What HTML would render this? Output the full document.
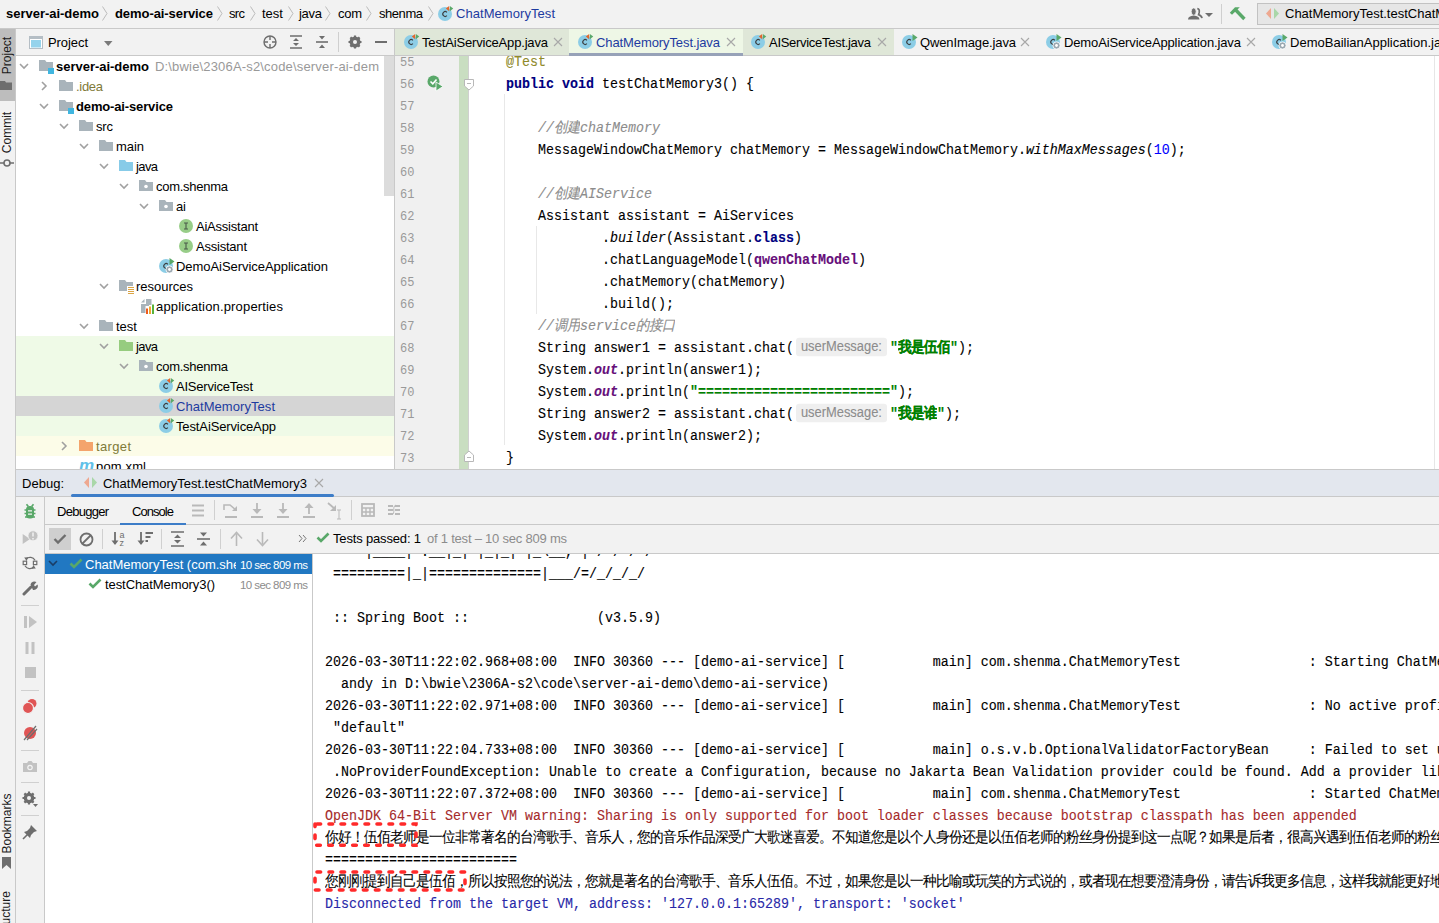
<!DOCTYPE html>
<html><head><meta charset="utf-8"><title>IDE</title><style>
html,body{margin:0;padding:0;width:1439px;height:923px;overflow:hidden;background:#f2f2f2}
body>*,body div,body svg{position:absolute}
.t{white-space:pre;font-family:"Liberation Sans",sans-serif;font-size:13px;color:#000}
.code{font-family:"Liberation Mono",monospace;font-size:13.335px;color:#000;transform:scaleY(1.1);transform-origin:0 14.5px;-webkit-text-stroke:0.1px currentColor}
.cj{display:inline-block;overflow:hidden;vertical-align:top;white-space:nowrap}
.hint{display:inline-block;position:relative;vertical-align:top;margin:1.3px 3px 0 2px;width:91px;height:16.4px;line-height:16.4px;background:#efefef;border-radius:3px;font-family:"Liberation Sans",sans-serif;font-size:12.9px;color:#8c8c8c;text-indent:5px;overflow:hidden}
</style></head><body>
<div style="left:0px;top:0px;width:1439px;height:923px;background:#f2f2f2;"></div>
<div style="left:0px;top:28px;width:1439px;height:1px;background:#c9c9c9;"></div>
<div class="t" style="letter-spacing:-0.017px;left:6px;top:3.5px;height:20px;line-height:20px;font-family:'Liberation Sans', sans-serif;font-size:13px;font-weight:bold;font-style:normal;color:#000;">server-ai-demo</div>
<svg style="left:100.5px;top:6px;" width="8" height="15" viewBox="0 0 8 15"><path d="M1.5 0.5 L6 7.5 L1.5 14.5" fill="none" stroke="#bcbcbc" stroke-width="1"/></svg>
<div class="t" style="letter-spacing:-0.071px;left:115px;top:3.5px;height:20px;line-height:20px;font-family:'Liberation Sans', sans-serif;font-size:13px;font-weight:bold;font-style:normal;color:#000;">demo-ai-service</div>
<svg style="left:215.5px;top:6px;" width="8" height="15" viewBox="0 0 8 15"><path d="M1.5 0.5 L6 7.5 L1.5 14.5" fill="none" stroke="#bcbcbc" stroke-width="1"/></svg>
<div class="t" style="letter-spacing:-0.672px;left:229px;top:3.5px;height:20px;line-height:20px;font-family:'Liberation Sans', sans-serif;font-size:13px;font-weight:normal;font-style:normal;color:#000;">src</div>
<svg style="left:248.5px;top:6px;" width="8" height="15" viewBox="0 0 8 15"><path d="M1.5 0.5 L6 7.5 L1.5 14.5" fill="none" stroke="#bcbcbc" stroke-width="1"/></svg>
<div class="t" style="letter-spacing:0.010px;left:262px;top:3.5px;height:20px;line-height:20px;font-family:'Liberation Sans', sans-serif;font-size:13px;font-weight:normal;font-style:normal;color:#000;">test</div>
<svg style="left:286.5px;top:6px;" width="8" height="15" viewBox="0 0 8 15"><path d="M1.5 0.5 L6 7.5 L1.5 14.5" fill="none" stroke="#bcbcbc" stroke-width="1"/></svg>
<div class="t" style="letter-spacing:-0.286px;left:299px;top:3.5px;height:20px;line-height:20px;font-family:'Liberation Sans', sans-serif;font-size:13px;font-weight:normal;font-style:normal;color:#000;">java</div>
<svg style="left:323.5px;top:6px;" width="8" height="15" viewBox="0 0 8 15"><path d="M1.5 0.5 L6 7.5 L1.5 14.5" fill="none" stroke="#bcbcbc" stroke-width="1"/></svg>
<div class="t" style="letter-spacing:-0.281px;left:338px;top:3.5px;height:20px;line-height:20px;font-family:'Liberation Sans', sans-serif;font-size:13px;font-weight:normal;font-style:normal;color:#000;">com</div>
<svg style="left:364.5px;top:6px;" width="8" height="15" viewBox="0 0 8 15"><path d="M1.5 0.5 L6 7.5 L1.5 14.5" fill="none" stroke="#bcbcbc" stroke-width="1"/></svg>
<div class="t" style="letter-spacing:-0.450px;left:379px;top:3.5px;height:20px;line-height:20px;font-family:'Liberation Sans', sans-serif;font-size:13px;font-weight:normal;font-style:normal;color:#000;">shenma</div>
<svg style="left:426.5px;top:6px;" width="8" height="15" viewBox="0 0 8 15"><path d="M1.5 0.5 L6 7.5 L1.5 14.5" fill="none" stroke="#bcbcbc" stroke-width="1"/></svg>
<svg style="left:438px;top:6px;" width="17" height="17" viewBox="0 0 17 17"><circle cx="7" cy="8" r="7" fill="#8ccde6"/><path d="M8.9 6.3 A2.4 2.4 0 1 0 8.9 9.7" fill="none" stroke="#3c3f41" stroke-width="1.1"/><path d="M7.8 2.6 L11.2 0 V5.2 Z" fill="#e2662c"/><path d="M11.9 0 L15.2 2.6 L11.9 5.2 Z" fill="#59a869"/></svg>
<div class="t" style="letter-spacing:0.058px;left:456px;top:3.5px;height:20px;line-height:20px;font-family:'Liberation Sans', sans-serif;font-size:13px;font-weight:normal;font-style:normal;color:#1d3ba0;">ChatMemoryTest</div>
<svg style="left:1186px;top:6px;" width="18" height="16" viewBox="0 0 18 16"><path d="M11.3 2.6 Q13.8 2.8 13.2 6.5 L12.6 8.6 Q15.6 9.6 16 12.2" fill="none" stroke="#6e6e6e" stroke-width="1.7"/><ellipse cx="7.7" cy="5.6" rx="2.5" ry="3.7" fill="#6e6e6e" stroke="#f2f2f2" stroke-width="0.8"/><path d="M2 13.5 Q2.3 10 7.7 9.6 Q13.2 10 13.5 13.5 Z" fill="#6e6e6e"/></svg>
<svg style="left:1205px;top:13px;" width="9" height="5" viewBox="0 0 9 5"><path d="M0 0 H8 L4 4 Z" fill="#6e6e6e"/></svg>
<div style="left:1221px;top:4px;width:1px;height:20px;background:#cfcfcf;"></div>
<svg style="left:1229px;top:5px;" width="18" height="18" viewBox="0 0 18 18"><path d="M0.8 7.8 L6 2.2 L10.8 2.2 L7.2 5.8 L3 9.8 Z" fill="#59a869"/><path d="M6.5 4.8 L15.4 14" stroke="#59a869" stroke-width="3.4"/></svg>
<div style="left:1257px;top:3px;width:190px;height:22px;background:#e6e6e6;border:1px solid #c2c2c2;box-sizing:border-box;"></div>
<svg style="left:1266px;top:7px;" width="14" height="13" viewBox="0 0 14 13"><path d="M5 1 L0 6.5 L5 12 Z" fill="#eea890"/><path d="M8 1 L13 6.5 L8 12 Z" fill="#a9d7a9"/></svg>
<div class="t" style="left:1285px;top:3.5px;height:20px;line-height:20px;font-family:'Liberation Sans', sans-serif;font-size:13px;font-weight:normal;font-style:normal;color:#000;">ChatMemoryTest.testChatMemoryTest</div>
<div style="left:15px;top:29px;width:1px;height:894px;background:#c9c9c9;"></div>
<div style="left:0px;top:29px;width:15px;height:72px;background:#bdbdbd;"></div>
<div class="t vlabel" style="left:-26px;top:48px;width:66px;height:15px;line-height:15px;font-size:12px;transform:rotate(-90deg);text-align:center;color:#1a1a1a">Project</div>
<svg style="left:0px;top:81px;" width="13" height="9" viewBox="0 0 13 9"><path d="M0 0 H5 L6 1.5 H12 V9 H0 Z" fill="#6e6e6e"/></svg>
<div class="t vlabel" style="left:-26px;top:125px;width:66px;height:15px;line-height:15px;font-size:12px;transform:rotate(-90deg);text-align:center;color:#1a1a1a">Commit</div>
<svg style="left:0px;top:158px;" width="14" height="10" viewBox="0 0 14 10"><circle cx="7" cy="5" r="3" fill="none" stroke="#6e6e6e" stroke-width="1.6"/><path d="M0 5 H4 M10 5 H14" stroke="#6e6e6e" stroke-width="1.6"/></svg>
<div class="t vlabel" style="left:-23px;top:816px;width:60px;height:15px;line-height:15px;font-size:12px;transform:rotate(-90deg);text-align:center;color:#1a1a1a">Bookmarks</div>
<svg style="left:1px;top:857px;" width="12" height="13" viewBox="0 0 12 13"><path d="M1 0 H10 V12 L5.5 8 L1 12 Z" fill="#6e6e6e"/></svg>
<div class="t vlabel" style="left:-24px;top:908px;width:60px;height:15px;line-height:15px;font-size:12px;transform:rotate(-90deg);text-align:center;color:#1a1a1a">Structure</div>
<div style="left:16px;top:55px;width:378px;height:1px;background:#c9c9c9;"></div>
<svg style="left:29px;top:36px;" width="14" height="13" viewBox="0 0 14 13"><rect x="0.5" y="0.5" width="13" height="12" fill="#fff" stroke="#b5bec5"/><rect x="0.5" y="0.5" width="13" height="2.5" fill="#b5bec5"/><rect x="2" y="4" width="10" height="7.5" fill="#95d3ec"/></svg>
<div class="t" style="letter-spacing:-0.078px;left:48px;top:33.0px;height:20px;line-height:20px;font-family:'Liberation Sans', sans-serif;font-size:13px;font-weight:normal;font-style:normal;color:#000;">Project</div>
<svg style="left:104px;top:41px;" width="10" height="6" viewBox="0 0 10 6"><path d="M0 0 H8.5 L4.25 5 Z" fill="#7a7a7a"/></svg>
<svg style="left:263px;top:35px;" width="14" height="14" viewBox="0 0 14 14"><circle cx="7" cy="7" r="6" fill="none" stroke="#6e6e6e" stroke-width="1.4"/><path d="M7 1 V5 M7 9 V13 M1 7 H5 M9 7 H13" stroke="#6e6e6e" stroke-width="1.4"/></svg>
<svg style="left:290px;top:35px;" width="13" height="14" viewBox="0 0 13 14"><path d="M0 1 H12 M0 13 H12" stroke="#6e6e6e" stroke-width="1.6"/><path d="M3 6 L6 3 L9 6 Z M3 8 L6 11 L9 8 Z" fill="#6e6e6e"/></svg>
<svg style="left:316px;top:35px;" width="13" height="14" viewBox="0 0 13 14"><path d="M0 7 H12" stroke="#6e6e6e" stroke-width="1.6"/><path d="M3 1 H9 L6 4.5 Z M3 13 H9 L6 9.5 Z" fill="#6e6e6e"/></svg>
<div style="left:338px;top:32px;width:1px;height:20px;background:#cfcfcf;"></div>
<svg style="left:348px;top:35px;" width="14" height="14" viewBox="0 0 14 14"><circle cx="7" cy="7" r="4.2" fill="none" stroke="#6e6e6e" stroke-width="2.6"/><path d="M7 0.5 V13.5 M0.5 7 H13.5 M2.4 2.4 L11.6 11.6 M11.6 2.4 L2.4 11.6" stroke="#6e6e6e" stroke-width="2.2"/><circle cx="7" cy="7" r="2" fill="#f2f2f2"/></svg>
<div style="left:375px;top:41px;width:12px;height:2px;background:#6e6e6e;"></div>
<div style="left:16px;top:56px;width:378px;height:413px;overflow:hidden;">
<div style="left:0px;top:0px;width:378px;height:413px;background:#fff;"></div>
<div style="left:368px;top:0px;width:10px;height:140px;background:#dcdcdc;"></div>
<div style="left:0px;top:280px;width:378px;height:60px;background:#effae7;"></div>
<div style="left:0px;top:360px;width:378px;height:20px;background:#effae7;"></div>
<div style="left:0px;top:340px;width:378px;height:20px;background:#d5d5d5;"></div>
<div style="left:0px;top:380px;width:378px;height:20px;background:#fcfce8;"></div>
<svg style="left:3px;top:7px;" width="10" height="7" viewBox="0 0 10 7"><path d="M1 1 L5 5 L9 1" fill="none" stroke="#a0a0a0" stroke-width="1.6"/></svg>
<svg style="left:23px;top:4px;" width="16" height="15" viewBox="0 0 16 15"><path d="M0 0 H6 L7.5 2 H14 V11 H0 Z" fill="#a9b4bb"/><rect x="9" y="8" width="6" height="6" fill="#40b6e0"/></svg>
<div class="t" style="letter-spacing:-0.017px;left:40px;top:1.0px;height:20px;line-height:20px;font-family:'Liberation Sans', sans-serif;font-size:13px;font-weight:bold;font-style:normal;color:#000;">server-ai-demo</div>
<div class="t" style="letter-spacing:0.170px;left:139px;top:1.0px;height:20px;line-height:20px;font-family:'Liberation Sans', sans-serif;font-size:13px;font-weight:normal;font-style:normal;color:#999999;">D:\bwie\2306A-s2\code\server-ai-dem</div>
<svg style="left:25px;top:25px;" width="7" height="10" viewBox="0 0 7 10"><path d="M1 1 L5 5 L1 9" fill="none" stroke="#a0a0a0" stroke-width="1.6"/></svg>
<svg style="left:43px;top:24px;" width="16" height="15" viewBox="0 0 16 15"><path d="M0 0 H6 L7.5 2 H14 V11 H0 Z" fill="#a9b4bb"/></svg>
<div class="t" style="letter-spacing:-0.301px;left:60px;top:21.0px;height:20px;line-height:20px;font-family:'Liberation Sans', sans-serif;font-size:13px;font-weight:normal;font-style:normal;color:#7f7a3a;">.idea</div>
<svg style="left:23px;top:47px;" width="10" height="7" viewBox="0 0 10 7"><path d="M1 1 L5 5 L9 1" fill="none" stroke="#a0a0a0" stroke-width="1.6"/></svg>
<svg style="left:43px;top:44px;" width="16" height="15" viewBox="0 0 16 15"><path d="M0 0 H6 L7.5 2 H14 V11 H0 Z" fill="#a9b4bb"/><rect x="9" y="8" width="6" height="6" fill="#40b6e0"/></svg>
<div class="t" style="letter-spacing:-0.143px;left:60px;top:41.0px;height:20px;line-height:20px;font-family:'Liberation Sans', sans-serif;font-size:13px;font-weight:bold;font-style:normal;color:#000;">demo-ai-service</div>
<svg style="left:43px;top:67px;" width="10" height="7" viewBox="0 0 10 7"><path d="M1 1 L5 5 L9 1" fill="none" stroke="#a0a0a0" stroke-width="1.6"/></svg>
<svg style="left:63px;top:64px;" width="16" height="15" viewBox="0 0 16 15"><path d="M0 0 H6 L7.5 2 H14 V11 H0 Z" fill="#a9b4bb"/></svg>
<div class="t" style="letter-spacing:-0.172px;left:80px;top:61.0px;height:20px;line-height:20px;font-family:'Liberation Sans', sans-serif;font-size:13px;font-weight:normal;font-style:normal;color:#000;">src</div>
<svg style="left:63px;top:87px;" width="10" height="7" viewBox="0 0 10 7"><path d="M1 1 L5 5 L9 1" fill="none" stroke="#a0a0a0" stroke-width="1.6"/></svg>
<svg style="left:83px;top:84px;" width="16" height="15" viewBox="0 0 16 15"><path d="M0 0 H6 L7.5 2 H14 V11 H0 Z" fill="#a9b4bb"/></svg>
<div class="t" style="letter-spacing:-0.062px;left:100px;top:81.0px;height:20px;line-height:20px;font-family:'Liberation Sans', sans-serif;font-size:13px;font-weight:normal;font-style:normal;color:#000;">main</div>
<svg style="left:83px;top:107px;" width="10" height="7" viewBox="0 0 10 7"><path d="M1 1 L5 5 L9 1" fill="none" stroke="#a0a0a0" stroke-width="1.6"/></svg>
<svg style="left:103px;top:104px;" width="16" height="15" viewBox="0 0 16 15"><path d="M0 0 H6 L7.5 2 H14 V11 H0 Z" fill="#87cbe8"/></svg>
<div class="t" style="letter-spacing:-0.620px;left:120px;top:101.0px;height:20px;line-height:20px;font-family:'Liberation Sans', sans-serif;font-size:13px;font-weight:normal;font-style:normal;color:#000;">java</div>
<svg style="left:103px;top:127px;" width="10" height="7" viewBox="0 0 10 7"><path d="M1 1 L5 5 L9 1" fill="none" stroke="#a0a0a0" stroke-width="1.6"/></svg>
<svg style="left:123px;top:124px;" width="16" height="13" viewBox="0 0 16 13"><path d="M0 0 H6 L7.5 2 H14 V11 H0 Z" fill="#a9b4bb"/><circle cx="7" cy="6.5" r="1.8" fill="#fff"/></svg>
<div class="t" style="letter-spacing:-0.269px;left:140px;top:121.0px;height:20px;line-height:20px;font-family:'Liberation Sans', sans-serif;font-size:13px;font-weight:normal;font-style:normal;color:#000;">com.shenma</div>
<svg style="left:123px;top:147px;" width="10" height="7" viewBox="0 0 10 7"><path d="M1 1 L5 5 L9 1" fill="none" stroke="#a0a0a0" stroke-width="1.6"/></svg>
<svg style="left:143px;top:144px;" width="16" height="13" viewBox="0 0 16 13"><path d="M0 0 H6 L7.5 2 H14 V11 H0 Z" fill="#a9b4bb"/><circle cx="7" cy="6.5" r="1.8" fill="#fff"/></svg>
<div class="t" style="letter-spacing:-0.125px;left:160px;top:141.0px;height:20px;line-height:20px;font-family:'Liberation Sans', sans-serif;font-size:13px;font-weight:normal;font-style:normal;color:#000;">ai</div>
<svg style="left:163px;top:163px;" width="15" height="15" viewBox="0 0 15 15"><circle cx="7" cy="7" r="7" fill="#98cd88"/><path d="M5 4 H9 M7 4 V10 M5 10 H9" stroke="#4a5a4a" stroke-width="1.1" fill="none"/></svg>
<div class="t" style="letter-spacing:-0.231px;left:180px;top:161.0px;height:20px;line-height:20px;font-family:'Liberation Sans', sans-serif;font-size:13px;font-weight:normal;font-style:normal;color:#000;">AiAssistant</div>
<svg style="left:163px;top:183px;" width="15" height="15" viewBox="0 0 15 15"><circle cx="7" cy="7" r="7" fill="#98cd88"/><path d="M5 4 H9 M7 4 V10 M5 10 H9" stroke="#4a5a4a" stroke-width="1.1" fill="none"/></svg>
<div class="t" style="letter-spacing:-0.219px;left:180px;top:181.0px;height:20px;line-height:20px;font-family:'Liberation Sans', sans-serif;font-size:13px;font-weight:normal;font-style:normal;color:#000;">Assistant</div>
<svg style="left:143px;top:202px;" width="17" height="17" viewBox="0 0 17 17"><circle cx="7" cy="8" r="7" fill="#8ccde6"/><path d="M8.9 6.3 A2.4 2.4 0 1 0 8.9 9.7" fill="none" stroke="#3c3f41" stroke-width="1.1"/><path d="M10.5 0 L15.5 3.5 L10.5 7 Z" fill="#59a869"/><circle cx="10.5" cy="11.5" r="3.6" fill="#9aa7b0" stroke="#fff" stroke-width="0.8"/><circle cx="10.5" cy="11.5" r="1.4" fill="#fff"/></svg>
<div class="t" style="letter-spacing:-0.052px;left:160px;top:201.0px;height:20px;line-height:20px;font-family:'Liberation Sans', sans-serif;font-size:13px;font-weight:normal;font-style:normal;color:#000;">DemoAiServiceApplication</div>
<svg style="left:83px;top:227px;" width="10" height="7" viewBox="0 0 10 7"><path d="M1 1 L5 5 L9 1" fill="none" stroke="#a0a0a0" stroke-width="1.6"/></svg>
<svg style="left:103px;top:224px;" width="16" height="15" viewBox="0 0 16 15"><path d="M0 0 H6 L7.5 2 H14 V11 H0 Z" fill="#a9b4bb"/><rect x="8" y="6" width="8" height="9" fill="#fff"/><path d="M9 7.5 H15 M9 9.5 H15 M9 11.5 H15 M9 13.5 H15" stroke="#dca544" stroke-width="1.1"/></svg>
<div class="t" style="letter-spacing:-0.010px;left:120px;top:221.0px;height:20px;line-height:20px;font-family:'Liberation Sans', sans-serif;font-size:13px;font-weight:normal;font-style:normal;color:#000;">resources</div>
<svg style="left:124px;top:242px;" width="16" height="17" viewBox="0 0 16 17"><path d="M1 4.5 L4.5 1 V4.5 Z" fill="#a9b4bb"/><path d="M6 1 H11.5 V7 H9 V8 H5.5 V15 H1 V6 H6 Z" fill="#a9b4bb"/><rect x="6" y="10.5" width="2" height="5.5" fill="#ee5a1e"/><rect x="9" y="8.5" width="2" height="7.5" fill="#f0a732"/><rect x="12" y="6.5" width="2" height="9.5" fill="#59b33c"/></svg>
<div class="t" style="letter-spacing:0.163px;left:140px;top:241.0px;height:20px;line-height:20px;font-family:'Liberation Sans', sans-serif;font-size:13px;font-weight:normal;font-style:normal;color:#000;">application.properties</div>
<svg style="left:63px;top:267px;" width="10" height="7" viewBox="0 0 10 7"><path d="M1 1 L5 5 L9 1" fill="none" stroke="#a0a0a0" stroke-width="1.6"/></svg>
<svg style="left:83px;top:264px;" width="16" height="15" viewBox="0 0 16 15"><path d="M0 0 H6 L7.5 2 H14 V11 H0 Z" fill="#a9b4bb"/></svg>
<div class="t" style="letter-spacing:0.010px;left:100px;top:261.0px;height:20px;line-height:20px;font-family:'Liberation Sans', sans-serif;font-size:13px;font-weight:normal;font-style:normal;color:#000;">test</div>
<svg style="left:83px;top:287px;" width="10" height="7" viewBox="0 0 10 7"><path d="M1 1 L5 5 L9 1" fill="none" stroke="#a0a0a0" stroke-width="1.6"/></svg>
<svg style="left:103px;top:284px;" width="16" height="15" viewBox="0 0 16 15"><path d="M0 0 H6 L7.5 2 H14 V11 H0 Z" fill="#96cc7f"/></svg>
<div class="t" style="letter-spacing:-0.620px;left:120px;top:281.0px;height:20px;line-height:20px;font-family:'Liberation Sans', sans-serif;font-size:13px;font-weight:normal;font-style:normal;color:#000;">java</div>
<svg style="left:103px;top:307px;" width="10" height="7" viewBox="0 0 10 7"><path d="M1 1 L5 5 L9 1" fill="none" stroke="#a0a0a0" stroke-width="1.6"/></svg>
<svg style="left:123px;top:304px;" width="16" height="13" viewBox="0 0 16 13"><path d="M0 0 H6 L7.5 2 H14 V11 H0 Z" fill="#a9b4bb"/><circle cx="7" cy="6.5" r="1.8" fill="#fff"/></svg>
<div class="t" style="letter-spacing:-0.269px;left:140px;top:301.0px;height:20px;line-height:20px;font-family:'Liberation Sans', sans-serif;font-size:13px;font-weight:normal;font-style:normal;color:#000;">com.shenma</div>
<svg style="left:143px;top:322px;" width="17" height="17" viewBox="0 0 17 17"><circle cx="7" cy="8" r="7" fill="#8ccde6"/><path d="M8.9 6.3 A2.4 2.4 0 1 0 8.9 9.7" fill="none" stroke="#3c3f41" stroke-width="1.1"/><path d="M7.8 2.6 L11.2 0 V5.2 Z" fill="#e2662c"/><path d="M11.9 0 L15.2 2.6 L11.9 5.2 Z" fill="#59a869"/></svg>
<div class="t" style="letter-spacing:-0.207px;left:160px;top:321.0px;height:20px;line-height:20px;font-family:'Liberation Sans', sans-serif;font-size:13px;font-weight:normal;font-style:normal;color:#000;">AIServiceTest</div>
<svg style="left:143px;top:342px;" width="17" height="17" viewBox="0 0 17 17"><circle cx="7" cy="8" r="7" fill="#8ccde6"/><path d="M8.9 6.3 A2.4 2.4 0 1 0 8.9 9.7" fill="none" stroke="#3c3f41" stroke-width="1.1"/><path d="M7.8 2.6 L11.2 0 V5.2 Z" fill="#e2662c"/><path d="M11.9 0 L15.2 2.6 L11.9 5.2 Z" fill="#59a869"/></svg>
<div class="t" style="letter-spacing:0.058px;left:160px;top:341.0px;height:20px;line-height:20px;font-family:'Liberation Sans', sans-serif;font-size:13px;font-weight:normal;font-style:normal;color:#1d3ba0;">ChatMemoryTest</div>
<svg style="left:143px;top:362px;" width="17" height="17" viewBox="0 0 17 17"><circle cx="7" cy="8" r="7" fill="#8ccde6"/><path d="M8.9 6.3 A2.4 2.4 0 1 0 8.9 9.7" fill="none" stroke="#3c3f41" stroke-width="1.1"/><path d="M7.8 2.6 L11.2 0 V5.2 Z" fill="#e2662c"/><path d="M11.9 0 L15.2 2.6 L11.9 5.2 Z" fill="#59a869"/></svg>
<div class="t" style="letter-spacing:-0.126px;left:160px;top:361.0px;height:20px;line-height:20px;font-family:'Liberation Sans', sans-serif;font-size:13px;font-weight:normal;font-style:normal;color:#000;">TestAiServiceApp</div>
<svg style="left:45px;top:385px;" width="7" height="10" viewBox="0 0 7 10"><path d="M1 1 L5 5 L1 9" fill="none" stroke="#a0a0a0" stroke-width="1.6"/></svg>
<svg style="left:63px;top:384px;" width="16" height="15" viewBox="0 0 16 15"><path d="M0 0 H6 L7.5 2 H14 V11 H0 Z" fill="#f4a46c"/></svg>
<div class="t" style="letter-spacing:0.350px;left:80px;top:381.0px;height:20px;line-height:20px;font-family:'Liberation Sans', sans-serif;font-size:13px;font-weight:normal;font-style:normal;color:#7f7a3a;">target</div>
<div class="t" style="left:63px;top:400.0px;height:20px;line-height:20px;font-family:'Liberation Sans', sans-serif;font-size:17px;font-weight:bold;font-style:italic;color:#60c0e8;letter-spacing:-1px">m</div>
<div class="t" style="letter-spacing:0.146px;left:80px;top:401.0px;height:20px;line-height:20px;font-family:'Liberation Sans', sans-serif;font-size:13px;font-weight:normal;font-style:normal;color:#000;">pom.xml</div>
</div>
<div style="left:16px;top:469px;width:1423px;height:1px;background:#c9c9c9;"></div>
<div style="left:394px;top:29px;width:1px;height:440px;background:#c9c9c9;"></div>
<div style="left:395px;top:55px;width:1044px;height:1px;background:#c9c9c9;"></div>
<div style="left:395px;top:29px;width:174px;height:26px;background:#dfe7d8;"></div>
<div style="left:569px;top:29px;width:174px;height:26px;background:#eef7e6;"></div>
<div style="left:569px;top:53px;width:174px;height:3px;background:#97a2b8;"></div>
<div style="left:743px;top:29px;width:151px;height:26px;background:#dfe7d8;"></div>
<svg style="left:404px;top:34px;" width="17" height="17" viewBox="0 0 17 17"><circle cx="7" cy="8" r="7" fill="#8ccde6"/><path d="M8.9 6.3 A2.4 2.4 0 1 0 8.9 9.7" fill="none" stroke="#3c3f41" stroke-width="1.1"/><path d="M7.8 2.6 L11.2 0 V5.2 Z" fill="#e2662c"/><path d="M11.9 0 L15.2 2.6 L11.9 5.2 Z" fill="#59a869"/></svg>
<div class="t" style="letter-spacing:-0.167px;left:422px;top:33.0px;height:20px;line-height:20px;font-family:'Liberation Sans', sans-serif;font-size:13px;font-weight:normal;font-style:normal;color:#000;">TestAiServiceApp.java</div>
<svg style="left:553px;top:37px;" width="10" height="10" viewBox="0 0 10 10"><path d="M1 1 L9 9 M9 1 L1 9" stroke="#a8a8a8" stroke-width="1.1"/></svg>
<svg style="left:578px;top:34px;" width="17" height="17" viewBox="0 0 17 17"><circle cx="7" cy="8" r="7" fill="#8ccde6"/><path d="M8.9 6.3 A2.4 2.4 0 1 0 8.9 9.7" fill="none" stroke="#3c3f41" stroke-width="1.1"/><path d="M7.8 2.6 L11.2 0 V5.2 Z" fill="#e2662c"/><path d="M11.9 0 L15.2 2.6 L11.9 5.2 Z" fill="#59a869"/></svg>
<div class="t" style="letter-spacing:-0.095px;left:596px;top:33.0px;height:20px;line-height:20px;font-family:'Liberation Sans', sans-serif;font-size:13px;font-weight:normal;font-style:normal;color:#1d3ba0;">ChatMemoryTest.java</div>
<svg style="left:726px;top:37px;" width="10" height="10" viewBox="0 0 10 10"><path d="M1 1 L9 9 M9 1 L1 9" stroke="#a8a8a8" stroke-width="1.1"/></svg>
<svg style="left:751px;top:34px;" width="17" height="17" viewBox="0 0 17 17"><circle cx="7" cy="8" r="7" fill="#8ccde6"/><path d="M8.9 6.3 A2.4 2.4 0 1 0 8.9 9.7" fill="none" stroke="#3c3f41" stroke-width="1.1"/><path d="M7.8 2.6 L11.2 0 V5.2 Z" fill="#e2662c"/><path d="M11.9 0 L15.2 2.6 L11.9 5.2 Z" fill="#59a869"/></svg>
<div class="t" style="letter-spacing:-0.290px;left:769px;top:33.0px;height:20px;line-height:20px;font-family:'Liberation Sans', sans-serif;font-size:13px;font-weight:normal;font-style:normal;color:#000;">AIServiceTest.java</div>
<svg style="left:877px;top:37px;" width="10" height="10" viewBox="0 0 10 10"><path d="M1 1 L9 9 M9 1 L1 9" stroke="#a8a8a8" stroke-width="1.1"/></svg>
<svg style="left:902px;top:34px;" width="17" height="17" viewBox="0 0 17 17"><circle cx="7" cy="8" r="7" fill="#8ccde6"/><path d="M8.9 6.3 A2.4 2.4 0 1 0 8.9 9.7" fill="none" stroke="#3c3f41" stroke-width="1.1"/><path d="M10.5 0 L15.5 3.5 L10.5 7 Z" fill="#59a869"/></svg>
<div class="t" style="letter-spacing:-0.120px;left:920px;top:33.0px;height:20px;line-height:20px;font-family:'Liberation Sans', sans-serif;font-size:13px;font-weight:normal;font-style:normal;color:#000;">QwenImage.java</div>
<svg style="left:1020px;top:37px;" width="10" height="10" viewBox="0 0 10 10"><path d="M1 1 L9 9 M9 1 L1 9" stroke="#a8a8a8" stroke-width="1.1"/></svg>
<svg style="left:1046px;top:34px;" width="17" height="17" viewBox="0 0 17 17"><circle cx="7" cy="8" r="7" fill="#8ccde6"/><path d="M8.9 6.3 A2.4 2.4 0 1 0 8.9 9.7" fill="none" stroke="#3c3f41" stroke-width="1.1"/><path d="M10.5 0 L15.5 3.5 L10.5 7 Z" fill="#59a869"/><circle cx="10.5" cy="11.5" r="3.6" fill="#9aa7b0" stroke="#fff" stroke-width="0.8"/><circle cx="10.5" cy="11.5" r="1.4" fill="#fff"/></svg>
<div class="t" style="letter-spacing:-0.131px;left:1064px;top:33.0px;height:20px;line-height:20px;font-family:'Liberation Sans', sans-serif;font-size:13px;font-weight:normal;font-style:normal;color:#000;">DemoAiServiceApplication.java</div>
<svg style="left:1246px;top:37px;" width="10" height="10" viewBox="0 0 10 10"><path d="M1 1 L9 9 M9 1 L1 9" stroke="#a8a8a8" stroke-width="1.1"/></svg>
<svg style="left:1272px;top:34px;" width="17" height="17" viewBox="0 0 17 17"><circle cx="7" cy="8" r="7" fill="#8ccde6"/><path d="M8.9 6.3 A2.4 2.4 0 1 0 8.9 9.7" fill="none" stroke="#3c3f41" stroke-width="1.1"/><path d="M10.5 0 L15.5 3.5 L10.5 7 Z" fill="#59a869"/><circle cx="10.5" cy="11.5" r="3.6" fill="#9aa7b0" stroke="#fff" stroke-width="0.8"/><circle cx="10.5" cy="11.5" r="1.4" fill="#fff"/></svg>
<div class="t" style="letter-spacing:0.009px;left:1290px;top:33.0px;height:20px;line-height:20px;font-family:'Liberation Sans', sans-serif;font-size:13px;font-weight:normal;font-style:normal;color:#000;">DemoBailianApplication.java</div>
<div style="left:395px;top:56px;width:64px;height:413px;background:#f0f0f0;"></div>
<div style="left:459px;top:56px;width:9px;height:413px;background:#c9dec1;"></div>
<div style="left:468px;top:56px;width:1px;height:413px;background:#d0d0d0;"></div>
<div style="left:469px;top:56px;width:966px;height:413px;background:#fff;"></div>
<div style="left:1434px;top:56px;width:1px;height:413px;background:#e6e6e6;"></div>
<div style="left:1435px;top:56px;width:4px;height:413px;background:#fff;"></div>
<div style="left:395px;top:56px;width:1044px;height:413px;overflow:hidden;">
<div class="t" style="left:5px;top:-4.0px;height:22px;line-height:22px;font-family:'Liberation Mono', monospace;font-size:12px;font-weight:normal;font-style:normal;color:#999999;transform:scaleY(1.05);transform-origin:0 14px">55</div>
<div class="t" style="left:5px;top:18.0px;height:22px;line-height:22px;font-family:'Liberation Mono', monospace;font-size:12px;font-weight:normal;font-style:normal;color:#999999;transform:scaleY(1.05);transform-origin:0 14px">56</div>
<div class="t" style="left:5px;top:40.0px;height:22px;line-height:22px;font-family:'Liberation Mono', monospace;font-size:12px;font-weight:normal;font-style:normal;color:#999999;transform:scaleY(1.05);transform-origin:0 14px">57</div>
<div class="t" style="left:5px;top:62.0px;height:22px;line-height:22px;font-family:'Liberation Mono', monospace;font-size:12px;font-weight:normal;font-style:normal;color:#999999;transform:scaleY(1.05);transform-origin:0 14px">58</div>
<div class="t" style="left:5px;top:84.0px;height:22px;line-height:22px;font-family:'Liberation Mono', monospace;font-size:12px;font-weight:normal;font-style:normal;color:#999999;transform:scaleY(1.05);transform-origin:0 14px">59</div>
<div class="t" style="left:5px;top:106.0px;height:22px;line-height:22px;font-family:'Liberation Mono', monospace;font-size:12px;font-weight:normal;font-style:normal;color:#999999;transform:scaleY(1.05);transform-origin:0 14px">60</div>
<div class="t" style="left:5px;top:128.0px;height:22px;line-height:22px;font-family:'Liberation Mono', monospace;font-size:12px;font-weight:normal;font-style:normal;color:#999999;transform:scaleY(1.05);transform-origin:0 14px">61</div>
<div class="t" style="left:5px;top:150.0px;height:22px;line-height:22px;font-family:'Liberation Mono', monospace;font-size:12px;font-weight:normal;font-style:normal;color:#999999;transform:scaleY(1.05);transform-origin:0 14px">62</div>
<div class="t" style="left:5px;top:172.0px;height:22px;line-height:22px;font-family:'Liberation Mono', monospace;font-size:12px;font-weight:normal;font-style:normal;color:#999999;transform:scaleY(1.05);transform-origin:0 14px">63</div>
<div class="t" style="left:5px;top:194.0px;height:22px;line-height:22px;font-family:'Liberation Mono', monospace;font-size:12px;font-weight:normal;font-style:normal;color:#999999;transform:scaleY(1.05);transform-origin:0 14px">64</div>
<div class="t" style="left:5px;top:216.0px;height:22px;line-height:22px;font-family:'Liberation Mono', monospace;font-size:12px;font-weight:normal;font-style:normal;color:#999999;transform:scaleY(1.05);transform-origin:0 14px">65</div>
<div class="t" style="left:5px;top:238.0px;height:22px;line-height:22px;font-family:'Liberation Mono', monospace;font-size:12px;font-weight:normal;font-style:normal;color:#999999;transform:scaleY(1.05);transform-origin:0 14px">66</div>
<div class="t" style="left:5px;top:260.0px;height:22px;line-height:22px;font-family:'Liberation Mono', monospace;font-size:12px;font-weight:normal;font-style:normal;color:#999999;transform:scaleY(1.05);transform-origin:0 14px">67</div>
<div class="t" style="left:5px;top:282.0px;height:22px;line-height:22px;font-family:'Liberation Mono', monospace;font-size:12px;font-weight:normal;font-style:normal;color:#999999;transform:scaleY(1.05);transform-origin:0 14px">68</div>
<div class="t" style="left:5px;top:304.0px;height:22px;line-height:22px;font-family:'Liberation Mono', monospace;font-size:12px;font-weight:normal;font-style:normal;color:#999999;transform:scaleY(1.05);transform-origin:0 14px">69</div>
<div class="t" style="left:5px;top:326.0px;height:22px;line-height:22px;font-family:'Liberation Mono', monospace;font-size:12px;font-weight:normal;font-style:normal;color:#999999;transform:scaleY(1.05);transform-origin:0 14px">70</div>
<div class="t" style="left:5px;top:348.0px;height:22px;line-height:22px;font-family:'Liberation Mono', monospace;font-size:12px;font-weight:normal;font-style:normal;color:#999999;transform:scaleY(1.05);transform-origin:0 14px">71</div>
<div class="t" style="left:5px;top:370.0px;height:22px;line-height:22px;font-family:'Liberation Mono', monospace;font-size:12px;font-weight:normal;font-style:normal;color:#999999;transform:scaleY(1.05);transform-origin:0 14px">72</div>
<div class="t" style="left:5px;top:392.0px;height:22px;line-height:22px;font-family:'Liberation Mono', monospace;font-size:12px;font-weight:normal;font-style:normal;color:#999999;transform:scaleY(1.05);transform-origin:0 14px">73</div>
<svg style="left:32px;top:19px;" width="18" height="17" viewBox="0 0 18 17"><circle cx="6.5" cy="6.5" r="6" fill="#59a869"/><path d="M3.5 6.5 L5.8 8.8 L9.5 4.5" stroke="#fff" stroke-width="1.6" fill="none"/><path d="M9 7 L16 11.5 L9 16 Z" fill="#59a869" stroke="#fff" stroke-width="0.8"/></svg>
<svg style="left:69px;top:23px;" width="10" height="12" viewBox="0 0 10 12"><path d="M0.5 0.5 H9.5 V7 L5 11 L0.5 7 Z" fill="#fff" stroke="#b8b8b8"/><path d="M3 4.5 H7" stroke="#b8b8b8"/></svg>
<svg style="left:69px;top:394px;" width="10" height="12" viewBox="0 0 10 12"><path d="M0.5 11.5 H9.5 V5 L5 1 L0.5 5 Z" fill="#fff" stroke="#b8b8b8"/><path d="M3 7.5 H7" stroke="#b8b8b8"/></svg>
<div style="left:109px;top:38px;width:1px;height:351px;background:#e8e8e8;"></div>
<div style="left:141px;top:170px;width:1px;height:88px;background:#e8e8e8;"></div>
<div class="t code" style="left:79px;top:-4px;height:22px;line-height:22px;">    <span style="color:#8f8a2a">@Test</span></div>
<div class="t code" style="left:79px;top:18px;height:22px;line-height:22px;">    <span style="color:#000080;font-weight:bold">public</span> <span style="color:#000080;font-weight:bold">void</span> testChatMemory3() {</div>
<div class="t code" style="left:79px;top:62px;height:22px;line-height:22px;">        <span style="color:#8c8c8c;font-style:italic">//<span class="cj" style="width:26px">创建</span>chatMemory</span></div>
<div class="t code" style="left:79px;top:84px;height:22px;line-height:22px;">        MessageWindowChatMemory chatMemory = MessageWindowChatMemory.<span style="font-style:italic">withMaxMessages</span>(<span style="color:#0000ff">10</span>);</div>
<div class="t code" style="left:79px;top:128px;height:22px;line-height:22px;">        <span style="color:#8c8c8c;font-style:italic">//<span class="cj" style="width:26px">创建</span>AIService</span></div>
<div class="t code" style="left:79px;top:150px;height:22px;line-height:22px;">        Assistant assistant = AiServices</div>
<div class="t code" style="left:79px;top:172px;height:22px;line-height:22px;">                .<span style="font-style:italic">builder</span>(Assistant.<span style="color:#000080;font-weight:bold">class</span>)</div>
<div class="t code" style="left:79px;top:194px;height:22px;line-height:22px;">                .chatLanguageModel(<span style="color:#660e7a;font-weight:bold">qwenChatModel</span>)</div>
<div class="t code" style="left:79px;top:216px;height:22px;line-height:22px;">                .chatMemory(chatMemory)</div>
<div class="t code" style="left:79px;top:238px;height:22px;line-height:22px;">                .build();</div>
<div class="t code" style="left:79px;top:260px;height:22px;line-height:22px;">        <span style="color:#8c8c8c;font-style:italic">//<span class="cj" style="width:26px">调用</span>service<span class="cj" style="width:39px">的接口</span></span></div>
<div class="t code" style="left:79px;top:282px;height:22px;line-height:22px;">        String answer1 = assistant.chat(<span class="hint">userMessage:</span><span style="color:#008000;font-weight:bold">&quot;<span class="cj" style="width:52px">我是伍佰</span>&quot;</span>);</div>
<div class="t code" style="left:79px;top:304px;height:22px;line-height:22px;">        System.<span style="color:#660e7a;font-weight:bold;font-style:italic">out</span>.println(answer1);</div>
<div class="t code" style="left:79px;top:326px;height:22px;line-height:22px;">        System.<span style="color:#660e7a;font-weight:bold;font-style:italic">out</span>.println(<span style="color:#008000;font-weight:bold">&quot;========================&quot;</span>);</div>
<div class="t code" style="left:79px;top:348px;height:22px;line-height:22px;">        String answer2 = assistant.chat(<span class="hint">userMessage:</span><span style="color:#008000;font-weight:bold">&quot;<span class="cj" style="width:39px">我是谁</span>&quot;</span>);</div>
<div class="t code" style="left:79px;top:370px;height:22px;line-height:22px;">        System.<span style="color:#660e7a;font-weight:bold;font-style:italic">out</span>.println(answer2);</div>
<div class="t code" style="left:79px;top:392px;height:22px;line-height:22px;">    }</div>
</div>
<div style="left:16px;top:470px;width:1423px;height:26px;background:#e3e7ee;"></div>
<div style="left:16px;top:496px;width:1423px;height:1px;background:#c9c9c9;"></div>
<div class="t" style="letter-spacing:0.016px;left:22px;top:474.0px;height:20px;line-height:20px;font-family:'Liberation Sans', sans-serif;font-size:13px;font-weight:normal;font-style:normal;color:#000;">Debug:</div>
<svg style="left:84px;top:476px;" width="14" height="13" viewBox="0 0 14 13"><path d="M5 1 L0 6.5 L5 12 Z" fill="#eea890"/><path d="M8 1 L13 6.5 L8 12 Z" fill="#a9d7a9"/></svg>
<div class="t" style="letter-spacing:-0.016px;left:103px;top:474.0px;height:20px;line-height:20px;font-family:'Liberation Sans', sans-serif;font-size:13px;font-weight:normal;font-style:normal;color:#000;">ChatMemoryTest.testChatMemory3</div>
<svg style="left:314px;top:478px;" width="10" height="10" viewBox="0 0 10 10"><path d="M1 1 L9 9 M9 1 L1 9" stroke="#a8a8a8" stroke-width="1.1"/></svg>
<div style="left:71px;top:494px;width:263px;height:3px;background:#3d7dc8;border-radius:1.5px"></div>
<div style="left:16px;top:497px;width:28px;height:426px;background:#f2f2f2;"></div>
<div style="left:44px;top:497px;width:1px;height:426px;background:#c9c9c9;"></div>
<svg style="left:22px;top:503px;" width="16" height="17" viewBox="0 0 16 17"><path d="M4.5 1.2 L6.3 3.6 M11.5 1.2 L9.7 3.6 M2.5 7 H13.5 M2.5 10.5 H13.5 M3 14 H13" stroke="#59a869" stroke-width="1.6"/><rect x="4" y="3" width="8" height="12.5" rx="3.5" fill="#59a869"/><path d="M6 7.8 H10 M6 11.2 H10" stroke="#f2f2f2" stroke-width="1.3"/></svg>
<svg style="left:22px;top:529px;" width="17" height="16" viewBox="0 0 17 16"><path d="M0.7 5 L8 10 L0.7 15 Z" fill="#c2c2c2"/><circle cx="11" cy="6.8" r="5" fill="#c2c2c2" stroke="#f2f2f2" stroke-width="0.8"/><path d="M11 3.6 V7.6 M11 9 V10.4" stroke="#f2f2f2" stroke-width="1.5"/></svg>
<svg style="left:22px;top:555px;" width="16" height="16" viewBox="0 0 16 16"><path d="M4.2 4 A5.6 5.6 0 0 1 13 5.2" fill="none" stroke="#6e6e6e" stroke-width="1.3"/><path d="M11.8 12 A5.6 5.6 0 0 1 3 10.8" fill="none" stroke="#6e6e6e" stroke-width="1.3"/><path d="M2.2 2.5 L6.2 2.3 L4.6 6 Z M13.8 13.5 L9.8 13.7 L11.4 10 Z" fill="#6e6e6e"/><rect x="1.2" y="6.2" width="3.4" height="3.4" fill="none" stroke="#6e6e6e" stroke-width="1.2"/><rect x="11.4" y="6.2" width="3.4" height="3.4" fill="none" stroke="#6e6e6e" stroke-width="1.2"/></svg>
<svg style="left:22px;top:580px;" width="16" height="16" viewBox="0 0 16 16"><path d="M2 14 L9 7" stroke="#6e6e6e" stroke-width="3" stroke-linecap="round"/><path d="M8.5 4.5 A4 4 0 0 1 14.5 2 L12 5 L13 6.5 L15.5 4.5 A4 4 0 0 1 11 10 Z" fill="#6e6e6e"/></svg>
<div style="left:21px;top:605px;width:18px;height:1px;background:#d0d0d0;"></div>
<svg style="left:22px;top:614px;" width="16" height="16" viewBox="0 0 16 16"><rect x="2" y="2" width="3" height="12" fill="#c2c2c2"/><path d="M7 2 L15 8 L7 14 Z" fill="#c2c2c2"/></svg>
<svg style="left:22px;top:640px;" width="16" height="16" viewBox="0 0 16 16"><rect x="3.5" y="2" width="3" height="12" fill="#c2c2c2"/><rect x="9.5" y="2" width="3" height="12" fill="#c2c2c2"/></svg>
<div style="left:25px;top:667px;width:11px;height:11px;background:#c2c2c2;"></div>
<div style="left:21px;top:690px;width:18px;height:1px;background:#d0d0d0;"></div>
<svg style="left:22px;top:698px;" width="16" height="16" viewBox="0 0 16 16"><circle cx="10" cy="5.5" r="4.5" fill="#e05555"/><circle cx="6" cy="10" r="5.5" fill="#e05555" stroke="#f2f2f2" stroke-width="1.2"/></svg>
<svg style="left:22px;top:725px;" width="16" height="16" viewBox="0 0 16 16"><circle cx="8" cy="8" r="6" fill="#e05555"/><path d="M2 15 L14 1 M5 15 L15 4" stroke="#6e6e6e" stroke-width="1.2"/></svg>
<div style="left:21px;top:750px;width:18px;height:1px;background:#d0d0d0;"></div>
<svg style="left:22px;top:759px;" width="16" height="15" viewBox="0 0 16 15"><path d="M1 4 H5 L6.5 2 H9.5 L11 4 H15 V13 H1 Z" fill="#c2c2c2"/><circle cx="8" cy="8.5" r="2.8" fill="#f2f2f2"/><circle cx="8" cy="8.5" r="1.5" fill="#c2c2c2"/></svg>
<div style="left:21px;top:782px;width:18px;height:1px;background:#d0d0d0;"></div>
<svg style="left:22px;top:791px;" width="17" height="17" viewBox="0 0 17 17"><circle cx="7" cy="7" r="4" fill="none" stroke="#6e6e6e" stroke-width="2.6"/><path d="M7 0.5 V13.5 M0.5 7 H13.5 M2.4 2.4 L11.6 11.6 M11.6 2.4 L2.4 11.6" stroke="#6e6e6e" stroke-width="2.2"/><circle cx="7" cy="7" r="2" fill="#f2f2f2"/><path d="M11 13 H16 L13.5 16 Z" fill="#6e6e6e"/></svg>
<div style="left:21px;top:815px;width:18px;height:1px;background:#d0d0d0;"></div>
<svg style="left:22px;top:824px;" width="16" height="16" viewBox="0 0 16 16"><path d="M9 1 L15 7 L12 8 L9 11 L8 14 L2 8 L5 7 L8 4 Z" fill="#6e6e6e"/><path d="M1 15 L6 10" stroke="#6e6e6e" stroke-width="1.6"/></svg>
<div style="left:45px;top:497px;width:1394px;height:27px;background:#f2f2f2;"></div>
<div style="left:45px;top:524px;width:1394px;height:1px;background:#c9c9c9;"></div>
<div class="t" style="letter-spacing:-0.730px;left:57px;top:501.5px;height:20px;line-height:20px;font-family:'Liberation Sans', sans-serif;font-size:13px;font-weight:normal;font-style:normal;color:#000;">Debugger</div>
<div class="t" style="letter-spacing:-0.951px;left:132px;top:501.5px;height:20px;line-height:20px;font-family:'Liberation Sans', sans-serif;font-size:13px;font-weight:normal;font-style:normal;color:#000;">Console</div>
<div style="left:120px;top:523px;width:66px;height:2px;background:#3d7dc8;"></div>
<svg style="left:190px;top:503px;" width="16" height="15" viewBox="0 0 16 15"><path d="M2 2.5 H14 M2 7.5 H14 M2 12.5 H14" stroke="#b9b9b9" stroke-width="2.2"/></svg>
<div style="left:214px;top:500px;width:1px;height:20px;background:#d0d0d0;"></div>
<svg style="left:223px;top:502px;" width="16" height="17" viewBox="0 0 16 17"><path d="M1 8 V3 L7 3 L13 8" fill="none" stroke="#b9b9b9" stroke-width="1.6"/><path d="M9 9 L14 9 L14 4" fill="#b9b9b9"/><rect x="2" y="14" width="12" height="2" fill="#b9b9b9"/></svg>
<svg style="left:249px;top:502px;" width="16" height="17" viewBox="0 0 16 17"><path d="M8 1 V10" stroke="#b9b9b9" stroke-width="1.8"/><path d="M3.5 7 L8 12 L12.5 7 Z" fill="#b9b9b9"/><rect x="2" y="14" width="12" height="2" fill="#b9b9b9"/></svg>
<svg style="left:275px;top:502px;" width="16" height="17" viewBox="0 0 16 17"><path d="M8 1 V10" stroke="#b9b9b9" stroke-width="1.8"/><path d="M3.5 7 L8 12 L12.5 7 Z" fill="#b9b9b9"/><rect x="2" y="14" width="12" height="2" fill="#b9b9b9"/></svg>
<svg style="left:301px;top:502px;" width="16" height="17" viewBox="0 0 16 17"><path d="M8 12 V4" stroke="#b9b9b9" stroke-width="1.8"/><path d="M3.5 6 L8 1 L12.5 6 Z" fill="#b9b9b9"/><rect x="2" y="14" width="12" height="2" fill="#b9b9b9"/></svg>
<svg style="left:327px;top:502px;" width="16" height="18" viewBox="0 0 16 18"><path d="M1 1 L8 7" stroke="#b9b9b9" stroke-width="1.8"/><path d="M9 3 V9 H3 Z" fill="#b9b9b9"/><path d="M10 8 H14 M12 8 V17 M10 17 H14" stroke="#b9b9b9" stroke-width="1"/></svg>
<div style="left:351px;top:500px;width:1px;height:20px;background:#d0d0d0;"></div>
<svg style="left:361px;top:503px;" width="14" height="14" viewBox="0 0 14 14"><rect x="1" y="1" width="12" height="12" fill="none" stroke="#b9b9b9" stroke-width="1.8"/><path d="M1 5 H13 M1 9 H13 M5 5 V13 M9 5 V13" stroke="#b9b9b9" stroke-width="1.4"/></svg>
<svg style="left:386px;top:502px;" width="16" height="16" viewBox="0 0 16 16"><path d="M2 4 H7 M9 4 H14 M2 8 H7 M9 8 H14 M2 12 H7 M9 12 H14" stroke="#b9b9b9" stroke-width="1.8"/><path d="M9.5 3.2 C8 3.5 7.6 6.5 7.8 8 C8 10 7.5 12 6.3 12.8" fill="none" stroke="#b9b9b9" stroke-width="1"/></svg>
<div style="left:45px;top:525px;width:1394px;height:28px;background:#f2f2f2;"></div>
<div style="left:45px;top:553px;width:1394px;height:1px;background:#c9c9c9;"></div>
<div style="left:49px;top:528px;width:22px;height:22px;background:#cfcfcf;"></div>
<svg style="left:53px;top:533px;" width="14" height="12" viewBox="0 0 14 12"><path d="M1.5 6 L5 9.5 L12.5 2" fill="none" stroke="#6e6e6e" stroke-width="2.4"/></svg>
<svg style="left:79px;top:532px;" width="15" height="15" viewBox="0 0 15 15"><circle cx="7.5" cy="7.5" r="6" fill="none" stroke="#6e6e6e" stroke-width="1.8"/><path d="M3.5 11.5 L11.5 3.5" stroke="#6e6e6e" stroke-width="1.8"/></svg>
<div style="left:102px;top:529px;width:1px;height:20px;background:#d0d0d0;"></div>
<svg style="left:111px;top:530px;" width="17" height="17" viewBox="0 0 17 17"><path d="M4 2 V14" stroke="#6e6e6e" stroke-width="1.8"/><path d="M0.5 10.5 L4 15 L7.5 10.5 Z" fill="#6e6e6e"/><text x="8.5" y="7.5" font-size="9" fill="#6e6e6e" font-family="Liberation Sans">a</text><text x="8.5" y="15.5" font-size="9" fill="#6e6e6e" font-family="Liberation Sans">z</text></svg>
<svg style="left:137px;top:530px;" width="17" height="17" viewBox="0 0 17 17"><path d="M4 2 V14" stroke="#6e6e6e" stroke-width="1.8"/><path d="M0.5 10.5 L4 15 L7.5 10.5 Z" fill="#6e6e6e"/><path d="M8.5 3 H16 M8.5 7 H13.5 M8.5 11 H11" stroke="#6e6e6e" stroke-width="1.8"/></svg>
<div style="left:161px;top:529px;width:1px;height:20px;background:#d0d0d0;"></div>
<svg style="left:171px;top:531px;" width="14" height="16" viewBox="0 0 14 16"><path d="M0 1 H13 M0 15 H13" stroke="#6e6e6e" stroke-width="1.6"/><path d="M3 7 L6.5 3.5 L10 7 Z M3 9 L6.5 12.5 L10 9 Z" fill="#6e6e6e"/></svg>
<svg style="left:197px;top:531px;" width="14" height="16" viewBox="0 0 14 16"><path d="M0 8 H13" stroke="#6e6e6e" stroke-width="1.6"/><path d="M3 1.5 H10 L6.5 5.5 Z M3 14.5 H10 L6.5 10.5 Z" fill="#6e6e6e"/></svg>
<div style="left:220px;top:529px;width:1px;height:20px;background:#d0d0d0;"></div>
<svg style="left:229px;top:531px;" width="15" height="16" viewBox="0 0 15 16"><path d="M7.5 3 V15" stroke="#b9b9b9" stroke-width="1.6"/><path d="M2 7.5 L7.5 1.5 L13 7.5" fill="none" stroke="#b9b9b9" stroke-width="1.6"/></svg>
<svg style="left:255px;top:531px;" width="15" height="16" viewBox="0 0 15 16"><path d="M7.5 1 V13" stroke="#b9b9b9" stroke-width="1.6"/><path d="M2 8.5 L7.5 14.5 L13 8.5" fill="none" stroke="#b9b9b9" stroke-width="1.6"/></svg>
<svg style="left:298px;top:534px;" width="10" height="9" viewBox="0 0 10 9"><path d="M1 1 L4 4.5 L1 8 M5 1 L8 4.5 L5 8" fill="none" stroke="#777" stroke-width="1"/></svg>
<svg style="left:316px;top:532px;" width="14" height="11" viewBox="0 0 14 11"><path d="M1.5 5.5 L5 9 L12.5 1.5" fill="none" stroke="#59a869" stroke-width="2.6"/></svg>
<div class="t" style="letter-spacing:-0.166px;left:333px;top:529.0px;height:20px;line-height:20px;font-family:'Liberation Sans', sans-serif;font-size:13px;font-weight:normal;font-style:normal;color:#000;">Tests passed: 1</div>
<div class="t" style="letter-spacing:-0.219px;left:427px;top:529.0px;height:20px;line-height:20px;font-family:'Liberation Sans', sans-serif;font-size:13px;font-weight:normal;font-style:normal;color:#8c8c8c;">of 1 test – 10 sec 809 ms</div>
<div style="left:45px;top:554px;width:267px;height:369px;background:#fff;"></div>
<div style="left:312px;top:554px;width:1px;height:369px;background:#c9c9c9;"></div>
<div style="left:45px;top:554px;width:267px;height:20px;background:#2178c2;"></div>
<svg style="left:48px;top:560px;" width="10" height="7" viewBox="0 0 10 7"><path d="M1 1 L5 5 L9 1" fill="none" stroke="#1a3d66" stroke-width="1.6"/></svg>
<svg style="left:69px;top:558px;" width="14" height="11" viewBox="0 0 14 11"><path d="M1.5 5.5 L5 9 L12.5 1.5" fill="none" stroke="#59a869" stroke-width="2.6"/></svg>
<div style="left:85px;top:554px;width:151px;height:20px;overflow:hidden;">
<div class="t" style="left:0px;top:1.0px;height:20px;line-height:20px;font-family:'Liberation Sans', sans-serif;font-size:13px;font-weight:normal;font-style:normal;color:#fff;">ChatMemoryTest (com.shenma)</div>
</div>
<div class="t" style="letter-spacing:-0.566px;left:240px;top:555.0px;height:20px;line-height:20px;font-family:'Liberation Sans', sans-serif;font-size:11.5px;font-weight:normal;font-style:normal;color:#fff;">10 sec 809 ms</div>
<svg style="left:88px;top:578px;" width="14" height="11" viewBox="0 0 14 11"><path d="M1.5 5.5 L5 9 L12.5 1.5" fill="none" stroke="#59a869" stroke-width="2.6"/></svg>
<div class="t" style="letter-spacing:-0.078px;left:105px;top:575.0px;height:20px;line-height:20px;font-family:'Liberation Sans', sans-serif;font-size:13px;font-weight:normal;font-style:normal;color:#000;">testChatMemory3()</div>
<div class="t" style="letter-spacing:-0.566px;left:240px;top:575.0px;height:20px;line-height:20px;font-family:'Liberation Sans', sans-serif;font-size:11.5px;font-weight:normal;font-style:normal;color:#8c8c8c;">10 sec 809 ms</div>
<div style="left:313px;top:554px;width:1126px;height:369px;background:#fff;"></div>
<div style="left:313px;top:554px;width:1126px;height:369px;overflow:hidden;">
<div class="t code" style="left:12px;top:-34px;height:22px;line-height:22px;"> \\/  ___)| |_)| | | | | || (_| |  ) ) ) )</div>
<div class="t code" style="left:12px;top:-12px;height:22px;line-height:22px;">  &#x27;  |____| .__|_| |_|_| |_\__, | / / / /</div>
<div class="t code" style="left:12px;top:10px;height:22px;line-height:22px;"> =========|_|==============|___/=/_/_/_/</div>
<div class="t code" style="left:12px;top:54px;height:22px;line-height:22px;"> :: Spring Boot ::                (v3.5.9)</div>
<div class="t code" style="left:12px;top:98px;height:22px;line-height:22px;">2026-03-30T11:22:02.968+08:00  INFO 30360 --- [demo-ai-service] [           main] com.shenma.ChatMemoryTest                : Starting ChatMemoryTest using Java 17.0.12 with PID 30360</div>
<div class="t code" style="left:12px;top:120px;height:22px;line-height:22px;">  andy in D:\bwie\2306A-s2\code\server-ai-demo\demo-ai-service)</div>
<div class="t code" style="left:12px;top:142px;height:22px;line-height:22px;">2026-03-30T11:22:02.971+08:00  INFO 30360 --- [demo-ai-service] [           main] com.shenma.ChatMemoryTest                : No active profile set, falling back to 1 default profile:</div>
<div class="t code" style="left:12px;top:164px;height:22px;line-height:22px;"> &quot;default&quot;</div>
<div class="t code" style="left:12px;top:186px;height:22px;line-height:22px;">2026-03-30T11:22:04.733+08:00  INFO 30360 --- [demo-ai-service] [           main] o.s.v.b.OptionalValidatorFactoryBean     : Failed to set up a Bean Validation provider: jakarta.validation</div>
<div class="t code" style="left:12px;top:208px;height:22px;line-height:22px;"> .NoProviderFoundException: Unable to create a Configuration, because no Jakarta Bean Validation provider could be found. Add a provider like Hibernate Validator</div>
<div class="t code" style="left:12px;top:230px;height:22px;line-height:22px;">2026-03-30T11:22:07.372+08:00  INFO 30360 --- [demo-ai-service] [           main] com.shenma.ChatMemoryTest                : Started ChatMemoryTest in 5.123 seconds</div>
<div class="t code" style="left:12px;top:252px;height:22px;line-height:22px;"><span style="color:#a52b2b">OpenJDK 64-Bit Server VM warning: Sharing is only supported for boot loader classes because bootstrap classpath has been appended</span></div>
<div class="t code" style="left:12px;top:274px;height:22px;line-height:22px;"><span class="cj" style="width:1118px">你好！伍佰老师是一位非常著名的台湾歌手、音乐人，您的音乐作品深受广大歌迷喜爱。不知道您是以个人身份还是以伍佰老师的粉丝身份提到这一点呢？如果是后者，很高兴遇到伍佰老师的粉丝</span></div>
<div class="t code" style="left:12px;top:296px;height:22px;line-height:22px;">========================</div>
<div class="t code" style="left:12px;top:318px;height:22px;line-height:22px;"><span class="cj" style="width:1118px">您刚刚提到自己是伍佰，所以按照您的说法，您就是著名的台湾歌手、音乐人伍佰。不过，如果您是以一种比喻或玩笑的方式说的，或者现在想要澄清身份，请告诉我更多信息，这样我就能更好地</span></div>
<div class="t code" style="left:12px;top:340px;height:22px;line-height:22px;"><span style="color:#2828a8">Disconnected from the target VM, address: &#x27;127.0.0.1:65289&#x27;, transport: &#x27;socket&#x27;</span></div>
<svg style="left:-1px;top:266.5px;" width="107" height="27.299999999999955" viewBox="0 0 107 27.299999999999955"><rect x="3" y="3" width="101" height="21.299999999999955" fill="none" stroke="#ff2a2a" stroke-width="3.6" stroke-dasharray="3.6 8.4" stroke-dashoffset="-2" stroke-linecap="round"/></svg>
<svg style="left:-1px;top:314.5px;" width="156" height="24.0" viewBox="0 0 156 24.0"><rect x="3" y="3" width="150" height="18.0" fill="none" stroke="#ff2a2a" stroke-width="3.6" stroke-dasharray="3.6 8.4" stroke-dashoffset="-2" stroke-linecap="round"/></svg>
</div>
</body></html>
